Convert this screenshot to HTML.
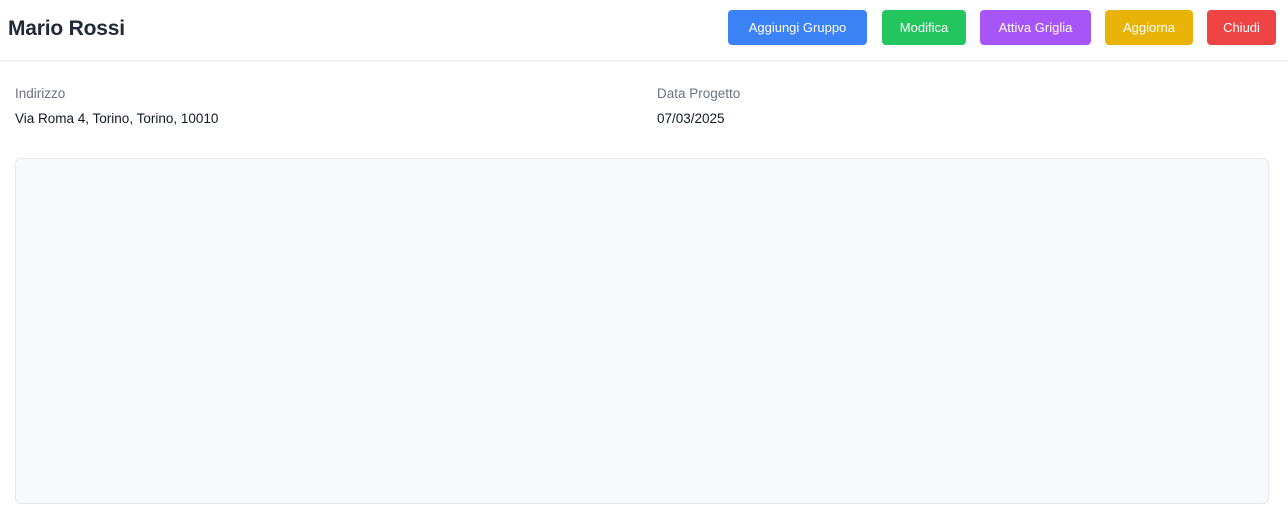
<!DOCTYPE html>
<html><head><meta charset="utf-8"><style>
*{box-sizing:border-box;margin:0;padding:0}
body{width:1288px;height:522px;background:#fff;font-family:"Liberation Sans",sans-serif;position:relative;overflow:hidden}
.hdr{position:absolute;left:0;top:0;width:1288px;height:61px;border-bottom:1px solid #e5e7eb}
h1{position:absolute;left:8px;top:17px;font-size:21px;font-weight:bold;color:#1f2937;letter-spacing:-0.2px}
.b{position:absolute;top:10px;height:35px;border-radius:4px;color:#fff;font-size:13px;line-height:35px;text-align:center}
.l{position:absolute;font-size:13.5px;color:#6b7280}
.v{position:absolute;font-size:13.5px;color:#111827}
.box{position:absolute;left:15px;top:158px;width:1254px;height:346px;background:#f8f9fb;border:1px solid #e5e7eb;border-radius:6px}
</style></head><body>
<div class="hdr">
<h1>Mario Rossi</h1>
<div class="b" style="left:728px;width:139px;background:#3b82f6">Aggiungi Gruppo</div>
<div class="b" style="left:882px;width:84px;background:#22c55e">Modifica</div>
<div class="b" style="left:980px;width:111px;background:#a855f7">Attiva Griglia</div>
<div class="b" style="left:1105px;width:88px;background:#eab308">Aggiorna</div>
<div class="b" style="left:1207px;width:69px;background:#ef4444">Chiudi</div>
</div>
<div class="l" style="left:15px;top:86px">Indirizzo</div>
<div class="v" style="left:15px;top:111px">Via Roma 4, Torino, Torino, 10010</div>
<div class="l" style="left:657px;top:86px">Data Progetto</div>
<div class="v" style="left:657px;top:111px">07/03/2025</div>
<div class="box"></div>
</body></html>
